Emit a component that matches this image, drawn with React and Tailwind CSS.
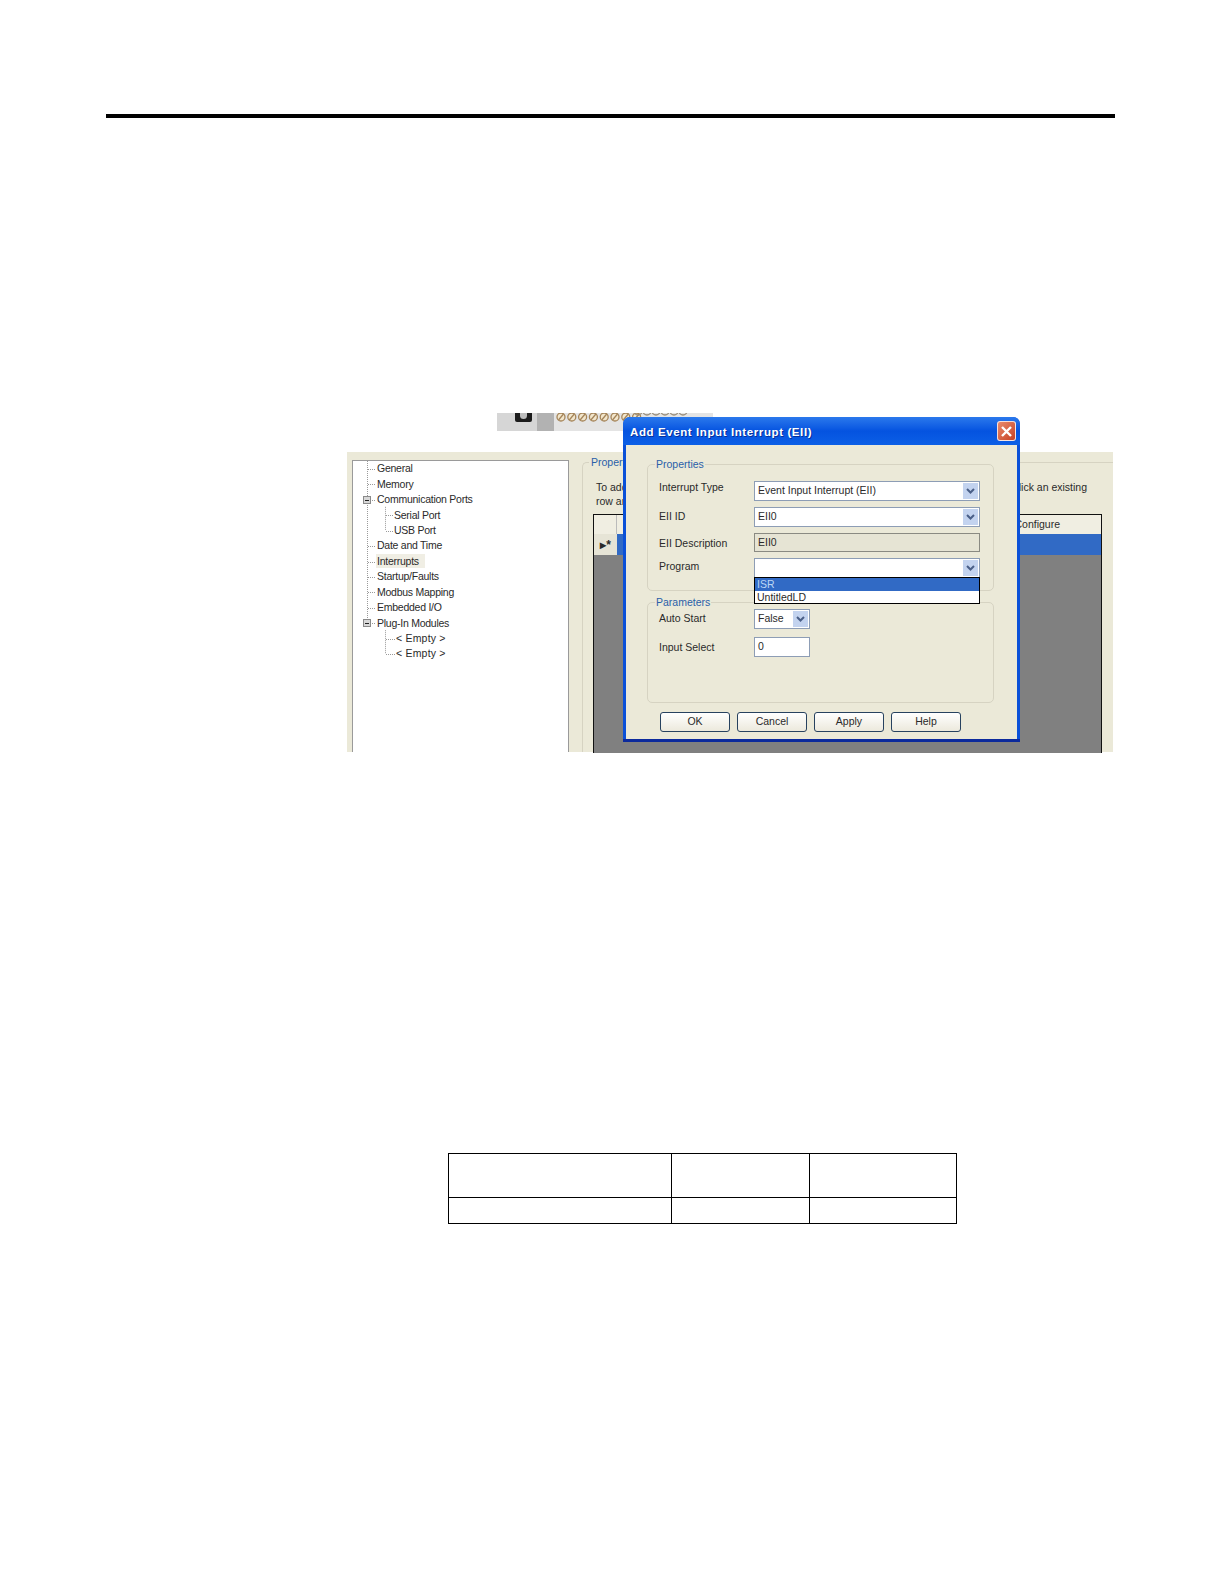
const TREE = [
  { label: 'General', level: 0 },
  { label: 'Memory', level: 0 },
  { label: 'Communication Ports', level: 0, box: true },
  { label: 'Serial Port', level: 1 },
  { label: 'USB Port', level: 1 },
  { label: 'Date and Time', level: 0 },
  { label: 'Interrupts', level: 0, active: true },
  { label: 'Startup/Faults', level: 0 },
  { label: 'Modbus Mapping', level: 0 },
  { label: 'Embedded I/O', level: 0 },
  { label: 'Plug-In Modules', level: 0, box: true },
  { label: '< Empty >', level: 2 },
  { label: '< Empty >', level: 2 },
];

const rowY = (i) => 8 + i * 15.42;

function TreeLines() {
  return (
    <svg className="absolute left-0 top-0" width="60" height="210" fill="none" stroke="#9a9a9a" strokeDasharray="1 1">
      <path d={`M14.5 0V${rowY(10)}`} />
      <path d={`M32.5 ${rowY(2) + 7}V${rowY(4)}`} />
      <path d={`M32.5 ${rowY(10) + 7}V${rowY(12)}`} />
      {TREE.map((t, i) => {
        const y = Math.round(rowY(i)) + 0.5;
        return t.level === 0
          ? <path key={i} d={`M15 ${y}H23`} />
          : <path key={i} d={`M33 ${y}H${t.level === 2 ? 42 : 40}`} />;
      })}
      {TREE.map((t, i) => {
        if (!t.box) return null;
        const y = Math.round(rowY(i));
        return (
          <g key={i} strokeDasharray="none">
            <rect x="10.5" y={y - 3.5} width="7" height="7" fill="#d8d8d8" stroke="#8a8a8a" />
            <path d={`M12 ${y + 0.5}H16`} stroke="#222" />
          </g>
        );
      })}
    </svg>
  );
}

function Chevron() {
  return (
    <svg width="9" height="6" viewBox="0 0 9 6" fill="none" stroke="#4a5f88" strokeWidth="2">
      <path d="M1 1l3.5 3.5L8 1" />
    </svg>
  );
}

function Combo({ value, className = 'w-[226px]' }) {
  return (
    <div className={`${className} h-[20px] bg-white border border-[#8d9db5] flex items-center justify-between pl-[3px] pr-[1px] text-[10.5px]`}>
      <span>{value}</span>
      <span className="w-[15px] h-[16px] bg-[#c3d3ef] flex items-center justify-center"><Chevron /></span>
    </div>
  );
}

function Row({ label, labelClass = '', children }) {
  return (
    <div className="flex items-center">
      <span className={`w-[95px] text-[10.5px] leading-[12px] ${labelClass}`}>{label}</span>
      {children}
    </div>
  );
}

function GroupBox({ title, className, children }) {
  return (
    <div className={`relative border border-[#d6d3c2] rounded-[5px] ml-[21px] w-[347px] pl-[11px] ${className}`}>
      <span className="absolute -top-[8px] left-[7px] bg-[#ebe9d8] px-[1px] text-[10.5px] leading-[14px] text-[#2a5fa8]">{title}</span>
      {children}
    </div>
  );
}

function Dialog() {
  return (
    <div className="absolute left-[276px] -top-[35px] w-[397px] h-[325px] rounded-t-[7px] bg-[#0a50d8] border-b-[3px] border-[#0c2a9c] flex flex-col overflow-hidden">
      <div className="h-[28px] shrink-0 flex items-center justify-between pl-[7px] pr-[4px] bg-linear-to-b from-[#2a78ec] via-[#0553e0] to-[#0c5fe6]">
        <span className="pt-[3px] text-white font-bold text-[11.5px] tracking-[0.6px] [text-shadow:1px_1px_0_#06309a]">Add Event Input Interrupt (EII)</span>
        <span className="w-[19px] h-[20px] rounded-[3px] border border-white/80 bg-linear-to-br from-[#e88a6c] to-[#c63f22] flex items-center justify-center">
          <svg width="13" height="13" viewBox="0 0 13 13" fill="none" stroke="#fff" strokeWidth="2.4"><path d="M2 2l9 9M11 2l-9 9" /></svg>
        </span>
      </div>
      <div className="flex-1 ml-[3px] mr-[3px] bg-[#ebe9d8] pt-[19px] text-[#2a2a2a]">
        <GroupBox title="Properties" className="h-[127px] pt-[16px]">
          <div className="flex flex-col gap-[6px]">
            <Row label="Interrupt Type" labelClass="pb-[8px]"><Combo value="Event Input Interrupt (EII)" /></Row>
            <Row label="EII ID" labelClass="pb-[2px]"><Combo value="EII0" /></Row>
            <Row label="EII Description">
              <div className="w-[226px] h-[19px] bg-[#e6e4d4] border border-[#8a8a82] flex items-center pl-[3px] text-[10.5px]">EII0</div>
            </Row>
            <Row label="Program" labelClass="pb-[4px]">
              <div className="relative">
                <Combo value="" />
                <div className="absolute left-0 top-[19px] w-[226px] h-[27px] bg-white border border-black z-10 text-[10.5px] leading-[13px]">
                  <div className="h-[13px] bg-[#316ac5] text-[#bcd7f5] pl-[2px]">ISR</div>
                  <div className="pl-[2px]">UntitledLD</div>
                </div>
              </div>
            </Row>
          </div>
        </GroupBox>
        <GroupBox title="Parameters" className="mt-[11px] h-[101px] pt-[6px]">
          <div className="flex flex-col gap-[8px]">
            <Row label="Auto Start" labelClass="pb-[2px]"><Combo value="False" className="w-[56px]" /></Row>
            <Row label="Input Select">
              <div className="w-[56px] h-[20px] bg-white border border-[#8d9db5] flex items-center pl-[3px] text-[10.5px]">0</div>
            </Row>
          </div>
        </GroupBox>
        <div className="flex mt-[9px] ml-[34px] gap-[7px]">
          {['OK', 'Cancel', 'Apply', 'Help'].map((b) => (
            <button key={b} className="w-[70px] h-[20px] rounded-[3px] border border-[#27425f] bg-linear-to-b from-white to-[#ece9dc] text-[10.5px] text-center">{b}</button>
          ))}
        </div>
      </div>
    </div>
  );
}

function ToolStrip() {
  const big = [0, 1, 2, 3, 4, 5, 6, 7];
  const small = [0, 1, 2, 3, 4, 5];
  return (
    <div className="absolute left-[150px] -top-[39px] w-[216px] h-[18px] flex overflow-hidden">
      <div className="w-[40px] bg-[#d6d6d6] flex justify-center pl-[12px]">
        <div className="w-[17px] h-[9px] bg-[#1c1c1c] rounded-b-[2px] flex justify-center">
          <span className="w-[7px] h-[6px] rounded-b-full bg-[#bdbdbd]" />
        </div>
      </div>
      <div className="w-[17px] bg-[#b2b2b2]" />
      <div className="flex-1 bg-[#e4e4e4]">
        <svg width="159" height="18" fill="none" strokeWidth="1.3">
          {big.map((n) => (
            <g key={n} stroke="#a5855a">
              <circle cx={7 + n * 10.8} cy="4" r="4" fill="#f2e6cc" />
              <path d={`M${4.5 + n * 10.8} 7L${9.5 + n * 10.8} 1`} />
            </g>
          ))}
          {small.map((n) => (
            <circle key={n} cx={84 + n * 9} cy="-2" r="4" stroke="#9a8f7c" />
          ))}
        </svg>
      </div>
    </div>
  );
}

function ConfigPanel() {
  return (
    <div className="relative ml-[347px] mt-[334px] w-[766px] h-[300px] bg-[#ebe9d8] flex pl-[5px] pt-[8px] text-[#2a2a2a] font-['Liberation_Sans',sans-serif]">
      <ToolStrip />
      <div className="relative w-[217px] h-[292px] bg-white border-t border-x border-[#9a9a9a] text-[10.5px] tracking-[-0.25px]">
        <TreeLines />
        {TREE.map((t, i) => (
          <div key={i} className={`h-[15.42px] flex items-center leading-none ${t.level === 0 ? 'pl-[24px]' : t.level === 1 ? 'pl-[41px]' : 'pl-[43px] tracking-[0.2px]'}`}>
            <span className={t.active ? 'bg-[#f0eee4] -ml-[1px] pl-[1px] pr-[6px] h-[14px] flex items-center' : ''}>{t.label}</span>
          </div>
        ))}
      </div>
      <div className="relative ml-[13px] mt-[2px] w-[531px] border-t border-l border-[#d6d3c2] rounded-tl-[5px] pl-[13px] pt-[17px]">
        <span className="absolute -top-[8px] left-[6px] bg-[#ebe9d8] px-[2px] text-[10.5px] leading-[14px] text-[#2a5fa8]">Properties</span>
        <div className="flex justify-between w-[491px] text-[10.5px] leading-[14px]">
          <span>To add</span>
          <span>click an existing</span>
        </div>
        <div className="text-[10.5px] leading-[14px]">row and</div>
        <div className="mt-[6px] w-[509px] h-[239px] border-t border-x border-[#111] bg-[#808080] -translate-x-[3px]">
          <div className="h-[19px] bg-[#f0eee2] flex">
            <div className="w-[23px] border-r border-[#bbb]" />
            <div className="flex-1 flex justify-end items-center pr-[41px] text-[10.5px]">Configure</div>
          </div>
          <div className="h-[21px] flex">
            <div className="w-[23px] bg-[#e6e4d6] flex items-center justify-center text-[12px] font-bold leading-none">▸*</div>
            <div className="flex-1 bg-[#316ac5]" />
          </div>
        </div>
      </div>
      <Dialog />
    </div>
  );
}

export default function App() {
  return (
    <div className="w-[1224px] h-[1584px] bg-white overflow-hidden flow-root">
      <div className="ml-[106px] mt-[114px] w-[1009px] h-[4px] bg-black" />
      <ConfigPanel />
      <table className="ml-[448px] mt-[401px] w-[509px] border-collapse table-fixed">
        <tbody>
          <tr className="h-[44px]">
            <td className="w-[223px] border border-black" />
            <td className="w-[138px] border border-black" />
            <td className="border border-black" />
          </tr>
          <tr className="h-[26px]">
            <td className="border border-black" />
            <td className="border border-black" />
            <td className="border border-black" />
          </tr>
        </tbody>
      </table>
    </div>
  );
}
